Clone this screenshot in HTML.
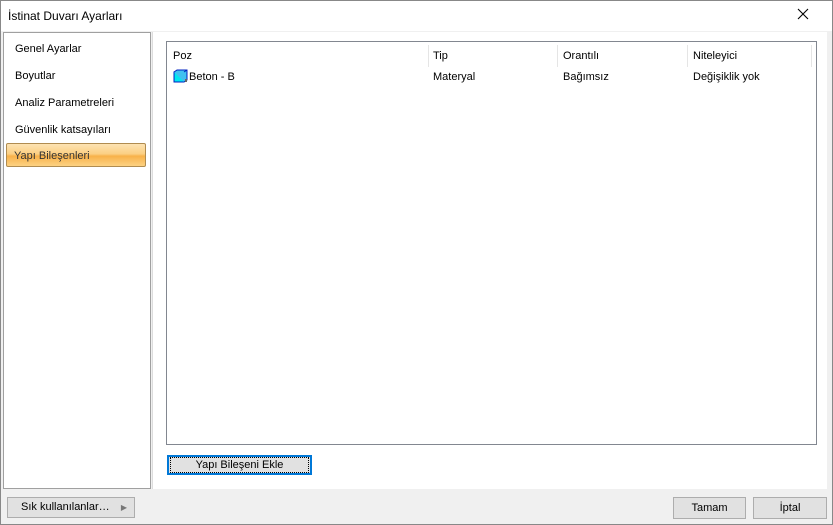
<!DOCTYPE html>
<html><head><meta charset="utf-8"><style>
*{margin:0;padding:0;box-sizing:border-box}
body{width:833px;height:525px;background:#f0f0f0;font-family:"Liberation Sans",Tahoma,sans-serif;font-size:11px;color:#000;position:relative;overflow:hidden}
.a{position:absolute}
.win{left:0;top:0;width:833px;height:525px;border:1px solid #888;}
.title{left:8px;top:9px;font-size:12px}
.titlebar{left:1px;top:1px;width:831px;height:30px;background:#fff}
.left{left:3px;top:32px;width:148px;height:457px;background:#fff;border:1px solid #a0a0a0}
.li{position:absolute;left:11px}
.sel{left:6px;top:143px;width:140px;height:24px;border:1px solid #b08c50;border-radius:2px;background:linear-gradient(#fde3b3 0%,#fbcf83 45%,#f8b24a 55%,#fcd283 100%);}
.right{left:152px;top:32px;width:675px;height:457px;background:#fff;border-left:1px solid #ddd}
.list{left:166px;top:41px;width:651px;height:404px;background:#fff;border:1px solid #828790}
.hdr{top:3px;height:22px;border-right:1px solid #e5e5e5}
.btn{background:#e1e1e1;border:1px solid #adadad;text-align:center}
</style></head><body>
<div class="a win"></div>
<div class="a titlebar"></div>
<div class="a title">İstinat Duvarı Ayarları</div>
<svg class="a" style="left:797px;top:8px" width="12" height="12"><path d="M1 1L11 11M11 1L1 11" stroke="#000" stroke-width="1.1"/></svg>
<div class="a left">
<div class="li" style="top:10px">Genel Ayarlar</div>
<div class="li" style="top:37px">Boyutlar</div>
<div class="li" style="top:64px">Analiz Parametreleri</div>
<div class="li" style="top:91px">Güvenlik katsayıları</div>
</div>
<div class="a sel"></div>
<div class="a" style="left:14px;top:150px;color:#333">Yapı Bileşenleri</div>
<div class="a right"></div>
<div class="a list">
<div class="a hdr" style="left:0;width:262px"></div>
<div class="a hdr" style="left:262px;width:129px"></div>
<div class="a hdr" style="left:391px;width:130px"></div>
<div class="a hdr" style="left:521px;width:124px"></div>
<div class="a" style="left:6px;top:8px">Poz</div>
<div class="a" style="left:266px;top:8px">Tip</div>
<div class="a" style="left:396px;top:8px">Orantılı</div>
<div class="a" style="left:526px;top:8px">Niteleyici</div>
<svg class="a" style="left:6px;top:27px" width="15" height="14"><rect x="1" y="3" width="10" height="10" fill="#00e8f0" stroke="#0020c0"/><path d="M1 3l3-2h10v10l-3 2M11 3l3-2" fill="#40c0f0" stroke="#0020c0"/><rect x="12" y="10" width="2" height="3" fill="#666"/></svg>
<div class="a" style="left:22px;top:29px">Beton - B</div>
<div class="a" style="left:266px;top:29px">Materyal</div>
<div class="a" style="left:396px;top:29px">Bağımsız</div>
<div class="a" style="left:526px;top:29px">Değişiklik yok</div>
</div>
<div class="a btn" style="left:167px;top:455px;width:145px;height:20px;border:2px solid #0078d7;line-height:16px"><span style="outline:1px dotted #000;outline-offset:1px;display:inline-block;width:135px;line-height:12px">Yapı Bileşeni Ekle</span></div>
<div class="a btn" style="left:7px;top:497px;width:128px;height:21px;line-height:19px;text-align:left;padding-left:13px">Sık kullanılanlar…<span style="position:absolute;right:7px;color:#777;font-size:8px">▶</span></div>
<div class="a btn" style="left:673px;top:497px;width:73px;height:22px;line-height:20px">Tamam</div>
<div class="a btn" style="left:753px;top:497px;width:74px;height:22px;line-height:20px">İptal</div>
</body></html>
